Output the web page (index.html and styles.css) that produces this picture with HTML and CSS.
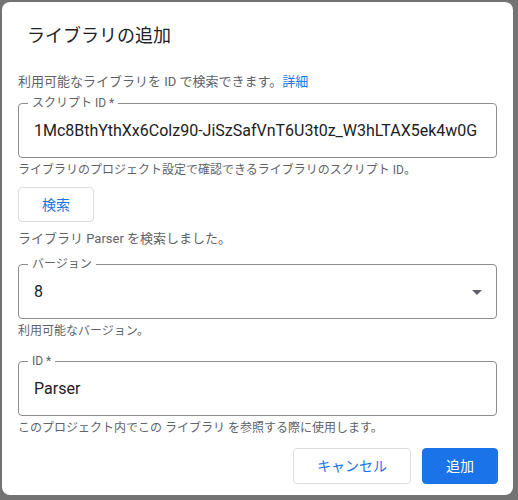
FILE: index.html
```html
<!DOCTYPE html>
<html lang="ja">
<head>
<meta charset="utf-8">
<title>ライブラリの追加</title>
<link rel="stylesheet" href="styles.css">
</head>
<body>
<div class="dialog">
  <h1 class="title">ライブラリの追加</h1>
  <p class="desc">利用可能なライブラリを ID で検索できます。<a class="link" href="#">詳細</a></p>

  <div class="field field-first">
    <span class="label">スクリプト ID *</span>
    <span class="value">1Mc8BthYthXx6Colz90-JiSzSafVnT6U3t0z_W3hLTAX5ek4w0G</span>
  </div>
  <p class="hint">ライブラリのプロジェクト設定で確認できるライブラリのスクリプト ID。</p>

  <button class="btn btn-outline btn-search">検索</button>
  <p class="status">ライブラリ Parser を検索しました。</p>

  <div class="field field-select">
    <span class="label">バージョン</span>
    <span class="value">8</span>
    <span class="caret"></span>
  </div>
  <p class="hint">利用可能なバージョン。</p>

  <div class="field field-id">
    <span class="label">ID *</span>
    <span class="value">Parser</span>
  </div>
  <p class="hint">このプロジェクト内でこの ライブラリ を参照する際に使用します。</p>

  <div class="actions">
    <button class="btn btn-outline">キャンセル</button>
    <button class="btn btn-primary">追加</button>
  </div>
</div>
</body>
</html>
```

FILE: styles.css
```css
html, body {
  margin: 0;
  padding: 0;
  background: #737373;
  height: 100%;
}
body {
  font-family: Roboto, "Noto Sans CJK JP", sans-serif;
  color: #202124;
}
.dialog {
  box-sizing: border-box;
  margin: 2px 0 0 2px;
  width: 511px;
  height: 493px;
  background: #fff;
  border-radius: 8px;
  padding: 22px 15px 0 16px;
  display: flex;
  flex-direction: column;
  align-items: stretch;
}
.title {
  margin: 0;
  padding-left: 9px;
  font-size: 18px;
  font-weight: 400;
  line-height: 24px;
  color: #202124;
}
.desc {
  margin: 25px 0 0 0;
  font-size: 13px;
  line-height: 18px;
  color: #5f6368;
}
.link {
  color: #1a73e8;
  text-decoration: none;
}
.field {
  position: relative;
  box-sizing: border-box;
  height: 55px;
  border: 1px solid #8a8e93;
  border-radius: 4px;
  display: flex;
  align-items: center;
  padding: 0 15px;
}
.field-first { margin-top: 12px; margin-right: 1px; }
.field-select { margin-top: 17px; margin-right: 1px; }
.field-id { margin-top: 22px; margin-right: 1px; }
.label {
  position: absolute;
  top: -9px;
  left: 9px;
  padding: 0 4px;
  background: #fff;
  font-size: 12px;
  line-height: 16px;
  color: #5f6368;
}
.value {
  font-size: 16px;
  line-height: 20px;
  color: #202124;
  white-space: nowrap;
}
.caret {
  position: absolute;
  right: 14px;
  top: 25px;
  width: 0;
  height: 0;
  border-left: 5px solid transparent;
  border-right: 5px solid transparent;
  border-top: 5px solid #5f6368;
}
.hint {
  margin: 4px 0 0 0;
  font-size: 12px;
  line-height: 16px;
  color: #5f6368;
  white-space: nowrap;
}
.status {
  margin: 9px 0 0 0;
  font-size: 13px;
  line-height: 16px;
  color: #5f6368;
}
.btn {
  box-sizing: border-box;
  height: 36px;
  padding: 0 23px;
  border-radius: 4px;
  font-family: Roboto, "Noto Sans CJK JP", sans-serif;
  font-size: 14px;
  line-height: 20px;
  cursor: pointer;
}
.btn-outline {
  background: #fff;
  border: 1px solid #dadce0;
  color: #1a73e8;
}
.btn-search {
  align-self: flex-start;
  margin-top: 9px;
  height: 35px;
}
.btn-primary {
  background: #1a73e8;
  border: 1px solid #1a73e8;
  color: #fff;
}
.actions {
  margin-top: 12px;
  display: flex;
  justify-content: flex-end;
  gap: 11px;
}
```
